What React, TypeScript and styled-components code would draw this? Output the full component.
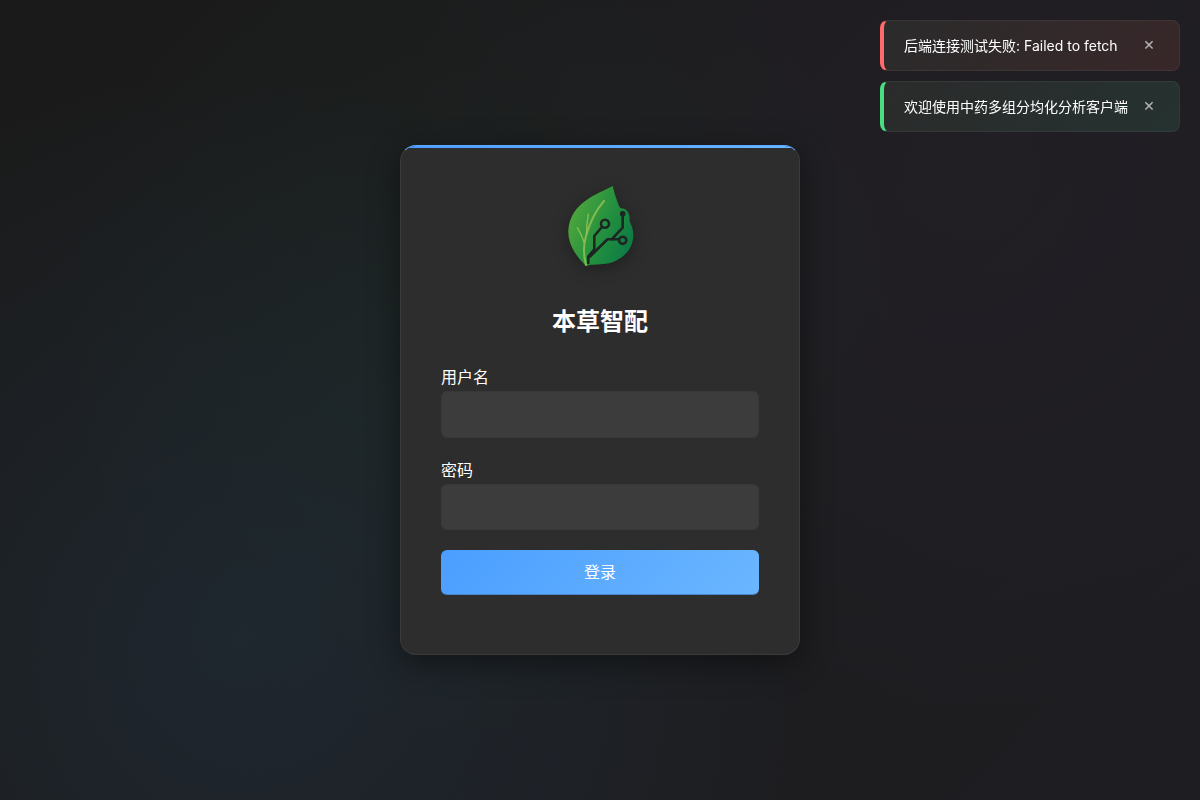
import React from 'react';
import styled, { createGlobalStyle } from 'styled-components';

const GlobalStyle = createGlobalStyle`
  * {
    box-sizing: border-box;
  }
  html, body {
    margin: 0;
    padding: 0;
    height: 100%;
    font-family: Inter, "Noto Sans CJK SC", sans-serif;
    background: #1a1a1a;
  }
`;

const Page = styled.div`
  min-height: 100vh;
  display: flex;
  align-items: center;
  justify-content: center;
  background:
    radial-gradient(circle at 20% 80%, rgba(60, 150, 220, 0.09) 0%, transparent 50%),
    radial-gradient(circle at 80% 20%, rgba(155, 89, 182, 0.04) 0%, transparent 50%),
    radial-gradient(circle at 40% 40%, rgba(46, 204, 113, 0.04) 0%, transparent 50%),
    linear-gradient(135deg, #1a1a1a 0%, #1e1e22 100%);
`;

const Card = styled.div`
  position: relative;
  width: 400px;
  height: 510px;
  padding: 40px;
  overflow: hidden;
  background: #2d2d2d;
  border: 1px solid #3a3a3a;
  border-top-color: #5aa8ff;
  border-radius: 16px;
  box-shadow: 0 8px 32px rgba(0, 0, 0, 0.45);

  &::before {
    content: '';
    position: absolute;
    top: 0;
    left: 0;
    right: 0;
    height: 2px;
    background: linear-gradient(90deg, #4a9eff, #6bb6ff);
  }
`;

const LogoWrap = styled.div`
  display: flex;
  justify-content: center;
  margin-bottom: 40px;

  svg {
    display: block;
    filter: drop-shadow(0 4px 8px rgba(0, 0, 0, 0.3));
  }
`;

const Title = styled.h1`
  margin: 0 0 27px;
  text-align: center;
  font-size: 24px;
  line-height: 32px;
  font-weight: 700;
  color: #ffffff;
`;

const Field = styled.div`
  display: flex;
  flex-direction: column;
  margin-bottom: 20px;
`;

const Label = styled.label`
  margin-bottom: 2px;
  font-size: 16px;
  line-height: 24px;
  color: #ffffff;
`;

const Input = styled.input`
  height: 46.5px;
  padding: 0 16px;
  background: #3c3c3c;
  border: 1px solid #383838;
  border-radius: 6px;
  color: #ffffff;
  font-size: 16px;
  outline: none;
`;

const LoginButton = styled.button`
  display: block;
  width: 100%;
  height: 45px;
  padding: 0 0 2px;
  border: none;
  border-bottom: 1px solid #4a86cc;
  border-radius: 6px;
  background: linear-gradient(135deg, #4a9eff, #6bb6ff);
  color: #ffffff;
  font-family: inherit;
  font-size: 16px;
  cursor: pointer;
`;

const ToastStack = styled.div`
  position: fixed;
  top: 20px;
  right: 20px;
  display: flex;
  flex-direction: column;
  gap: 10px;
  width: 300px;
`;

const Toast = styled.div<{ $kind: 'error' | 'success' }>`
  display: flex;
  align-items: center;
  justify-content: space-between;
  height: 51px;
  padding: 0 19px 2px 20px;
  border: 1px solid rgba(255, 255, 255, 0.06);
  border-left: 4px solid ${({ $kind }) => ($kind === 'error' ? '#ff6b6b' : '#4ade80')};
  border-radius: 8px;
  background: ${({ $kind }) =>
    $kind === 'error'
      ? 'linear-gradient(135deg, #2b2b2b, #382729)'
      : 'linear-gradient(135deg, #2b2b2b, #253230)'};
  color: #ffffff;
  font-size: 14px;
`;

const ToastClose = styled.button`
  width: 24px;
  height: 24px;
  margin-top: -1px;
  margin-right: -1px;
  padding: 0;
  border: none;
  background: none;
  color: #b0b0b0;
  font-family: inherit;
  font-size: 18px;
  line-height: 24px;
  cursor: pointer;
`;

const LeafLogo: React.FC = () => (
  <svg width="80" height="80" viewBox="0 0 80 80" aria-label="本草智配">
    <defs>
      <linearGradient id="leafFill" x1="0" y1="0.25" x2="1" y2="0.75">
        <stop offset="0" stopColor="#52a83c" />
        <stop offset="0.55" stopColor="#24903f" />
        <stop offset="1" stopColor="#0c7a45" />
      </linearGradient>
    </defs>
    <path
      d="M52.7 0C38 8 10 16 8.3 45C7.8 60 18 72 26 80C31 78 36 79 43 78C60 77 74 64 73.3 48C73 42 71 38 69.5 35C70.5 28 67 23 63 22.5C61 22.3 59.5 22.5 58.3 18C56 12 54 6 52.7 0Z"
      fill="url(#leafFill)"
    />
    <g fill="none" stroke="#96c455" strokeOpacity="0.8" strokeLinecap="round" strokeLinejoin="round">
      <path d="M26 79C23 68 23 60 26 50C30 36 36 24 44 15" strokeWidth="2" />
      <path d="M17.3 41.7C20 46 22 50 24 56" strokeWidth="1.5" />
      <path d="M28.3 28.3C27 35 26.5 42 26.5 48" strokeWidth="1.5" />
    </g>
    <g fill="none" stroke="#1d2622" strokeWidth="2.6" strokeLinecap="round" strokeLinejoin="round">
      <path d="M41.5 41.5L34.3 50V63.3L28.3 70.5V77" />
      <path d="M30 70.5L47.5 53.3H58.3" />
      <path d="M62.7 27.7V41.7L51.7 53.3" />
      <circle cx="45" cy="37.7" r="4" />
      <circle cx="62.7" cy="54.3" r="3.6" />
    </g>
    <circle cx="62.7" cy="27.7" r="2.8" fill="#1d2622" />
  </svg>
);

export default function App() {
  return (
    <>
      <GlobalStyle />
      <Page>
        <Card>
          <LogoWrap>
            <LeafLogo />
          </LogoWrap>
          <Title>本草智配</Title>
          <Field>
            <Label>用户名</Label>
            <Input type="text" />
          </Field>
          <Field>
            <Label>密码</Label>
            <Input type="password" />
          </Field>
          <LoginButton>登录</LoginButton>
        </Card>
      </Page>
      <ToastStack>
        <Toast $kind="error">
          <span>后端连接测试失败: Failed to fetch</span>
          <ToastClose>×</ToastClose>
        </Toast>
        <Toast $kind="success">
          <span>欢迎使用中药多组分均化分析客户端</span>
          <ToastClose>×</ToastClose>
        </Toast>
      </ToastStack>
    </>
  );
}
